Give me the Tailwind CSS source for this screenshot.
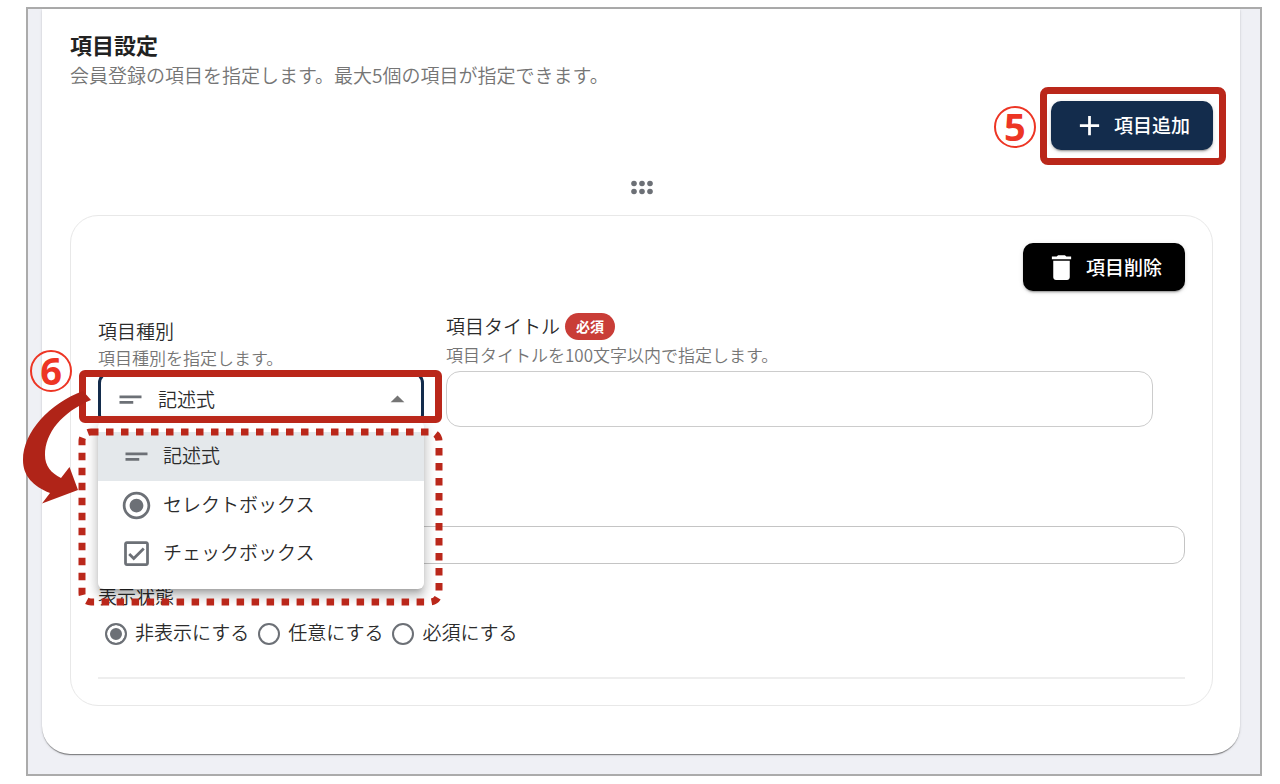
<!DOCTYPE html>
<html lang="ja">
<head>
  <meta charset="UTF-8" />
  <meta name="viewport" content="width=device-width, initial-scale=1.0"/>
  <title>項目設定</title>
  <script src="https://cdn.jsdelivr.net/npm/@tailwindcss/browser@4"></script>
</head>
<body class="bg-white min-h-screen pt-[7px] pb-2 pl-[26px] pr-[18px] font-['Noto_Sans_CJK_JP',sans-serif] font-[350] text-[19px] text-[#2b2b2b]">

  <div class="border-2 border-[#ababab] bg-[#eff0f5] pl-[14px] pr-5 pb-5">
    <main class="bg-white rounded-b-[28px] pl-7 pr-[27px] pt-5 pb-12 shadow-[0_2px_1px_-1px_rgba(0,0,0,0.3),0_1px_1px_0_rgba(0,0,0,0.2),0_1px_3px_0_rgba(0,0,0,0.12)]">

      <!-- Heading -->
      <h1 class="text-[22px] leading-[30px] font-bold text-[#222222]">項目設定</h1>
      <p class="leading-[32px] text-[#757575]">会員登録の項目を指定します。最大5個の項目が指定できます。</p>

      <!-- Add button -->
      <div class="mt-[10px] flex justify-end">
        <div class="relative">
          <button type="button" class="flex items-center gap-2 h-[49px] pl-[22px] pr-[23px] rounded-[10px] bg-[#132c4c] text-white font-medium shadow-[0_3px_1px_-2px_rgba(0,0,0,0.2),0_2px_2px_0_rgba(0,0,0,0.14),0_1px_5px_0_rgba(0,0,0,0.12)]">
            <svg class="size-[33px]" viewBox="0 0 24 24" fill="currentColor" aria-hidden="true"><path d="M19 13h-6v6h-2v-6H5v-2h6V5h2v6h6z"/></svg>
            項目追加
          </button>
          <div class="absolute -top-[14px] -bottom-[15px] -left-[11px] -right-[13px] border-[7px] border-[#ba271a] rounded-lg pointer-events-none"></div>
          <div class="absolute top-[5px] -left-[57px] size-[42px] pb-[3px] flex items-center justify-center rounded-full border-2 border-[#ed3524] text-[#ed3524] text-[38px] leading-none font-bold font-['Open_Sans',sans-serif]">5</div>
        </div>
      </div>

      <!-- Drag handle -->
      <div class="mt-[26px] mb-[15px] flex justify-center">
        <button type="button" aria-label="並べ替え" class="text-[#6c7076]">
          <svg class="w-6 h-6" viewBox="0 0 24 24" fill="currentColor">
            <circle cx="4" cy="7.500" r="2.800"/><circle cx="12" cy="7.500" r="2.800"/><circle cx="20" cy="7.500" r="2.800"/>
            <circle cx="4" cy="15.500" r="2.800"/><circle cx="12" cy="15.500" r="2.800"/><circle cx="20" cy="15.500" r="2.800"/>
          </svg>
        </button>
      </div>

      <!-- Item card -->
      <section class="border border-[#e8e8e8] rounded-[28px] px-[27px] pt-[27px] pb-[26px]">
        <div class="flex justify-end">
          <button type="button" class="flex items-center gap-2 h-12 pl-[22px] pr-[23px] rounded-[10px] bg-black text-white font-medium shadow-[0_3px_1px_-2px_rgba(0,0,0,0.2),0_2px_2px_0_rgba(0,0,0,0.14),0_1px_5px_0_rgba(0,0,0,0.12)]">
            <svg class="size-[33px]" viewBox="0 0 24 24" fill="currentColor" aria-hidden="true"><path d="M6 19c0 1.100.9 2 2 2h8c1.100 0 2-.9 2-2V7H6zM19 4h-3.500l-1-1h-5l-1 1H5v2h14z"/></svg>
            項目削除
          </button>
        </div>

        <div class="mt-[21px] flex items-end gap-[22px] pr-8">
          <!-- Item type -->
          <div class="w-[326px] shrink-0">
            <label for="itemType" class="block leading-7">項目種別</label>
            <p class="text-[17px] leading-[26px] text-[#757575]">項目種別を指定します。</p>
            <div class="relative z-10">
              <select id="itemType" class="appearance-none block w-full h-14 pl-[57px] rounded-xl border-[3px] border-[#132c4c] bg-white outline-none">
                <option>記述式</option>
                <option>セレクトボックス</option>
                <option>チェックボックス</option>
              </select>
              <svg class="absolute left-4 top-3 size-[33px] text-[#6c7076] pointer-events-none" viewBox="0 0 24 24" fill="currentColor"><path d="M4 9h16v2H4zm0 4h10v2H4z"/></svg>
              <svg class="absolute right-[10px] top-3 size-[33px] text-[#757575] pointer-events-none" viewBox="0 0 24 24" fill="currentColor"><path d="m7 14 5-5 5 5z"/></svg>

              <!-- Open menu -->
              <div role="listbox" aria-label="項目種別" class="absolute top-[50px] inset-x-0 py-[11px] rounded-md bg-white shadow-[0_5px_5px_-3px_rgba(0,0,0,0.2),0_8px_10px_1px_rgba(0,0,0,0.14),0_3px_14px_2px_rgba(0,0,0,0.12)]">
                <button type="button" role="option" aria-selected="true" class="flex w-full h-[49px] items-center gap-[10px] pl-[22px] bg-[#e4e8eb]">
                  <svg class="size-[33px] text-[#6c7076]" viewBox="0 0 24 24" fill="currentColor"><path d="M4 9h16v2H4zm0 4h10v2H4z"/></svg>
                  <span class="pb-0.5">記述式</span>
                </button>
                <button type="button" role="option" aria-selected="false" class="flex w-full h-12 items-center gap-[10px] pl-[22px]">
                  <svg class="size-[33px] text-[#6c7076]" viewBox="0 0 24 24" fill="currentColor"><path d="M12 7c-2.760 0-5 2.240-5 5s2.240 5 5 5 5-2.240 5-5-2.240-5-5-5m0-5C6.480 2 2 6.480 2 12s4.480 10 10 10 10-4.480 10-10S17.520 2 12 2m0 18c-4.420 0-8-3.580-8-8s3.580-8 8-8 8 3.580 8 8-3.580 8-8 8"/></svg>
                  <span class="pb-0.5">セレクトボックス</span>
                </button>
                <button type="button" role="option" aria-selected="false" class="flex w-full h-[49px] items-center gap-[10px] pl-[22px]">
                  <svg class="size-[33px] text-[#6c7076]" viewBox="0 0 24 24" fill="currentColor"><path d="M19 3H5c-1.100 0-2 .9-2 2v14c0 1.100.9 2 2 2h14c1.100 0 2-.9 2-2V5c0-1.100-.9-2-2-2m0 16H5V5h14zM17.990 9l-1.410-1.420-6.590 6.590-2.580-2.570-1.420 1.410 4 3.990z"/></svg>
                  <span class="pb-0.5">チェックボックス</span>
                </button>
              </div>

              <!-- Callout marks -->
              <div class="absolute -left-[19px] -right-[18px] -top-px h-[53px] border-[7px] border-[#ba271a] rounded-md pointer-events-none"></div>
              <svg class="absolute -left-[78px] -top-[11px] w-[430px] h-[250px] max-w-none pointer-events-none" viewBox="20 360 430 250">
                <rect x="82" y="432" width="357" height="170" rx="9" fill="none" stroke="#ba271a" stroke-width="7" stroke-dasharray="7.500 7.500"/>
                <path fill="#b02418" d="M83 391C50 403 23 432 23 460C23 476 33 486 50 493L42 503.500L78 490L69.500 467L61 478C51 473 45 466 45 455C45 433 62 412 91 400Z"/>
              </svg>
              <div class="absolute -top-[21px] -left-[68px] size-[42px] pb-[3px] flex items-center justify-center rounded-full border-2 border-[#ed3524] text-[#ed3524] text-[38px] leading-none font-bold font-['Open_Sans',sans-serif]">6</div>
            </div>
          </div>

          <!-- Item title -->
          <div class="flex-1">
            <div class="flex items-center gap-[5px] leading-7">
              <label for="itemTitle">項目タイトル</label>
              <span class="rounded-full bg-[#c93d37] px-[11px] text-[14px] leading-[27px] font-bold text-white">必須</span>
            </div>
            <p class="mb-px text-[17px] leading-[30px] text-[#757575]">項目タイトルを100文字以内で指定します。</p>
            <input id="itemTitle" type="text" class="block w-full h-14 px-4 rounded-[14px] border border-[#cccccc]" />
          </div>
        </div>

        <input type="text" aria-label="説明" class="mt-[99px] block w-full h-[38px] px-4 rounded-xl border border-[#c4c4c4]" />

        <!-- Display state -->
        <fieldset>
          <legend class="pt-[18px] leading-7">表示状態</legend>
          <div class="mt-[10px] ml-[7px] flex items-center gap-[9px] leading-6">
            <label class="flex items-center gap-2">
              <input type="radio" name="display" checked class="appearance-none size-[22px] rounded-full border-2 border-[#6c7076] checked:bg-[#6c7076] shadow-[inset_0_0_0_3px_#ffffff]" />
              <span class="pb-1">非表示にする</span>
            </label>
            <label class="flex items-center gap-2">
              <input type="radio" name="display" class="appearance-none size-[22px] rounded-full border-2 border-[#6c7076] checked:bg-[#6c7076] shadow-[inset_0_0_0_3px_#ffffff]" />
              <span class="pb-1">任意にする</span>
            </label>
            <label class="flex items-center gap-2">
              <input type="radio" name="display" class="appearance-none size-[22px] rounded-full border-2 border-[#6c7076] checked:bg-[#6c7076] shadow-[inset_0_0_0_3px_#ffffff]" />
              <span class="pb-1">必須にする</span>
            </label>
          </div>
        </fieldset>
        <hr class="mt-[29px] border-t-2 border-[#eeeeee]" />
      </section>

    </main>
  </div>

</body>
</html>
